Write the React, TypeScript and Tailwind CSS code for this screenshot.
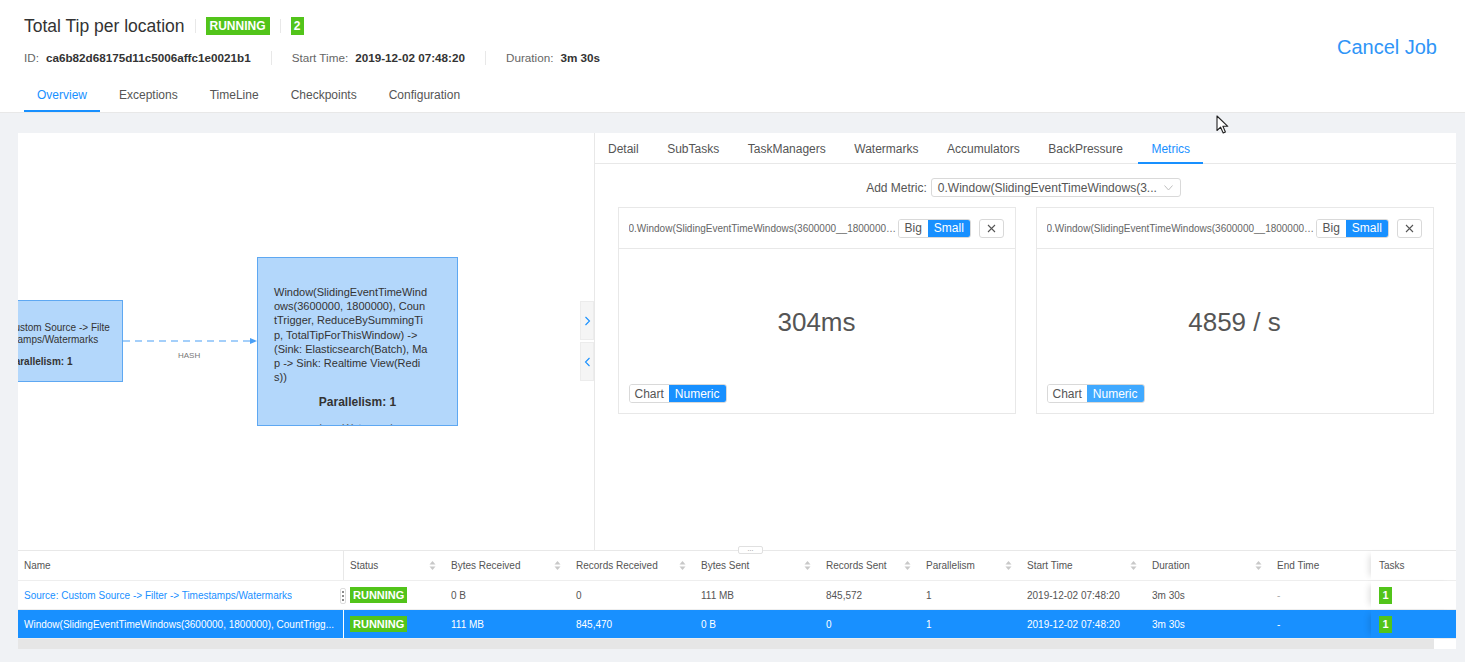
import React from 'react';

const Badge = ({ children, className = '' }: { children: React.ReactNode; className?: string }) => (
  <span className={`inline-flex items-center justify-center bg-[#52c41a] text-white font-bold ${className}`}>{children}</span>
);

const Sep = () => <span className="w-px h-[14px] bg-[#e8e8e8]" />;

const SortIcon = () => (
  <svg width="7" height="11" viewBox="0 0 7 11" className="shrink-0">
    <path d="M3.5 1L6.5 4.5H0.5Z" fill="#c8c8c8" />
    <path d="M3.5 10L0.5 6.5H6.5Z" fill="#c8c8c8" />
  </svg>
);

const Cursor = () => (
  <svg width="13" height="19" viewBox="0 0 13 19" className="absolute left-[1216px] top-[115px]">
    <path d="M1 1V15.5L4.6 12.2L7.2 18L9.4 17L6.9 11.3H11.8Z" fill="white" stroke="#222" strokeWidth="1.1" strokeLinejoin="round" />
  </svg>
);

const cols = [
  { name: 'Name', w: 326, sort: false },
  { name: 'Status', w: 101, sort: true },
  { name: 'Bytes Received', w: 125, sort: true },
  { name: 'Records Received', w: 125, sort: true },
  { name: 'Bytes Sent', w: 125, sort: true },
  { name: 'Records Sent', w: 100, sort: true },
  { name: 'Parallelism', w: 101, sort: true },
  { name: 'Start Time', w: 125, sort: true },
  { name: 'Duration', w: 125, sort: true },
  { name: 'End Time', w: 100, sort: false },
];

const rows = [
  {
    name: 'Source: Custom Source -> Filter -> Timestamps/Watermarks',
    values: ['0 B', '0', '111 MB', '845,572', '1', '2019-12-02 07:48:20', '3m 30s', '-'],
    selected: false,
  },
  {
    name: 'Window(SlidingEventTimeWindows(3600000, 1800000), CountTrigg...',
    values: ['111 MB', '845,470', '0 B', '0', '1', '2019-12-02 07:48:20', '3m 30s', '-'],
    selected: true,
  },
];

const gridCols = 'grid grid-cols-[326px_101px_125px_125px_125px_100px_101px_125px_125px_100px_85px]';

const MetricCard = ({ value, numericHover }: { value: string; numericHover?: boolean }) => (
  <div className="w-[398px] h-[207px] border border-[#e8e8e8] flex flex-col">
    <div className="h-[41px] border-b border-[#e8e8e8] flex items-center pl-[10px] pr-[11px]">
      <span className="w-[270px] truncate text-[10px] text-[#666]">0.Window(SlidingEventTimeWindows(3600000__1800000)__CountTrigger</span>
      <div className="flex h-[19px] text-[12px] rounded-[3px] overflow-hidden border border-[#d9d9d9]">
        <span className="px-[6px] flex items-center text-[#555] bg-white">Big</span>
        <span className="px-[6px] flex items-center text-white bg-[#1890ff]">Small</span>
      </div>
      <span className="ml-[8px] w-[25px] h-[19px] border border-[#d9d9d9] rounded-[3px] flex items-center justify-center">
        <svg width="9" height="9" viewBox="0 0 9 9">
          <path d="M1 1L8 8M8 1L1 8" stroke="#555" strokeWidth="1.1" />
        </svg>
      </span>
    </div>
    <div className="flex-1 flex flex-col px-[10px] pb-[10px]">
      <div className="flex-1 flex items-center justify-center text-[26px] text-[#555] pt-[12px]">{value}</div>
      <div className="flex h-[19px] text-[12px] rounded-[3px] overflow-hidden border border-[#d9d9d9] self-start">
        <span className="px-[5px] flex items-center text-[#555] bg-white">Chart</span>
        <span className={`px-[6px] flex items-center text-white ${numericHover ? 'bg-[#40a9ff]' : 'bg-[#1890ff]'}`}>Numeric</span>
      </div>
    </div>
  </div>
);

export default function App() {
  const topTabs = ['Overview', 'Exceptions', 'TimeLine', 'Checkpoints', 'Configuration'];
  const sideTabs = ['Detail', 'SubTasks', 'TaskManagers', 'Watermarks', 'Accumulators', 'BackPressure', 'Metrics'];

  return (
    <div className="relative w-[1465px] h-[662px] overflow-hidden bg-[#f0f2f5] font-['Liberation_Sans',Arial,sans-serif] text-[#333]">
      {/* header */}
      <header className="h-[113px] bg-white border-b border-[#e8e8e8] pl-6 pr-[28px] flex justify-between">
        <div className="pt-[14px]">
          <div className="flex items-center h-6">
            <h1 className="text-[17.5px] text-[#333] font-normal leading-6">Total Tip per location</h1>
            <span className="mx-[10px] flex"><Sep /></span>
            <Badge className="h-[18px] px-[4px] text-[12px]">RUNNING</Badge>
            <span className="mx-[10px] flex"><Sep /></span>
            <Badge className="h-[18px] w-[13px] text-[12px]">2</Badge>
          </div>
          <div className="mt-[11px] flex items-center h-[18px] text-[11.7px] gap-[20px]">
            <span>
              <span className="text-[#666]">ID:</span>
              <span className="ml-[7px] font-bold">ca6b82d68175d11c5006affc1e0021b1</span>
            </span>
            <Sep />
            <span>
              <span className="text-[#666]">Start Time:</span>
              <span className="ml-[7px] font-bold">2019-12-02 07:48:20</span>
            </span>
            <Sep />
            <span>
              <span className="text-[#666]">Duration:</span>
              <span className="ml-[7px] font-bold">3m 30s</span>
            </span>
          </div>
          <nav className="mt-[5px] flex gap-[6px] text-[12px]">
            {topTabs.map((t, i) => (
              <div key={t} className={`relative h-[40px] px-[13px] flex items-center pt-[6px] ${i === 0 ? 'text-[#1890ff]' : 'text-[#555]'}`}>
                {t}
                {i === 0 && <span className="absolute left-0 right-0 bottom-0 h-[2px] bg-[#1890ff]" />}
              </div>
            ))}
          </nav>
        </div>
        <div className="pt-[35px]">
          <button className="text-[20px] text-[#2f95f7] leading-6">Cancel Job</button>
        </div>
      </header>

      <main className="pt-[20px] pl-[18px]">
        <div className="w-[1438px] bg-white flex flex-col relative">
          <div className="flex h-[417px]">
            {/* graph canvas */}
            <div className="relative w-[576px] overflow-hidden">
              <div className="absolute left-[-77px] top-[167px] w-[182px] h-[82px] bg-[#b3d7fb] border border-[#5ea8f2] pl-[28px] pt-[21px] text-[10px] leading-[12px] text-[#333]">
                <div className="whitespace-nowrap">Source: Custom Source -&gt; Filte</div>
                <div className="whitespace-nowrap">r -&gt; Timestamps/Watermarks</div>
                <div className="mt-[10px] pl-[38px] whitespace-nowrap font-bold">Parallelism: 1</div>
              </div>
              <svg className="absolute left-[105px] top-[203px]" width="134" height="10" viewBox="0 0 134 10">
                <path d="M0 5H127" stroke="#4a9ff5" strokeWidth="1.2" strokeDasharray="7 5" />
                <path d="M127 2L134 5L127 8Z" fill="#4a9ff5" />
              </svg>
              <span className="absolute left-[160px] top-[217px] text-[8px] text-[#777]">HASH</span>
              <div className="absolute left-[239px] top-[124px] w-[201px] h-[169px] bg-[#b3d7fb] border border-[#5ea8f2] overflow-hidden px-4 pt-[27px] text-[11px] leading-[14.2px] text-[#333]">
                <div className="whitespace-nowrap">
                  <div>Window(SlidingEventTimeWind</div>
                  <div>ows(3600000, 1800000), Coun</div>
                  <div>tTrigger, ReduceBySummingTi</div>
                  <div>p, TotalTipForThisWindow) -&gt;</div>
                  <div>(Sink: Elasticsearch(Batch), Ma</div>
                  <div>p -&gt; Sink: Realtime View(Redi</div>
                  <div>s))</div>
                </div>
                <div className="mt-[11px] text-center font-bold text-[12px] leading-[14px]">Parallelism: 1</div>
                <div className="mt-[12px] text-center text-[11px] text-[#666]">Low Watermark</div>
              </div>
              <div className="absolute right-0 top-[168px] flex flex-col gap-[2px]">
                <span className="w-[14px] h-[39px] bg-[#f5f5f5] border border-[#ececec] flex items-center justify-center">
                  <svg width="7" height="10" viewBox="0 0 7 10"><path d="M1.5 1L5.5 5L1.5 9" fill="none" stroke="#1890ff" strokeWidth="1.1" /></svg>
                </span>
                <span className="w-[14px] h-[39px] bg-[#f5f5f5] border border-[#ececec] flex items-center justify-center">
                  <svg width="7" height="10" viewBox="0 0 7 10"><path d="M5.5 1L1.5 5L5.5 9" fill="none" stroke="#1890ff" strokeWidth="1.1" /></svg>
                </span>
              </div>
            </div>

            {/* side panel */}
            <div className="flex-1 border-l border-[#e8e8e8] flex flex-col">
              <div className="h-[31px] border-b border-[#e8e8e8] flex gap-[2.5px] text-[12px]">
                {sideTabs.map((t) => (
                  <div key={t} className={`relative px-[13px] pt-[2px] flex items-center ${t === 'Metrics' ? 'text-[#1890ff]' : 'text-[#555]'}`}>
                    {t}
                    {t === 'Metrics' && <span className="absolute left-0 right-0 bottom-[-1px] h-[2px] bg-[#1890ff]" />}
                  </div>
                ))}
              </div>
              <div className="mt-[14px] flex items-center justify-center gap-[4px] text-[12px] text-[#555] pr-[4px]">
                <span>Add Metric:</span>
                <div className="w-[250px] h-[19px] border border-[#d9d9d9] rounded-[3px] flex items-center justify-between pl-[6px] pr-[7px]">
                  <span>0.Window(SlidingEventTimeWindows(3...</span>
                  <svg width="9" height="6" viewBox="0 0 9 6"><path d="M0.5 0.5L4.5 5L8.5 0.5" fill="none" stroke="#bfbfbf" strokeWidth="1" /></svg>
                </div>
              </div>
              <div className="mt-[10px] flex justify-center gap-[20px]">
                <MetricCard value="304ms" />
                <MetricCard value="4859 / s" numericHover />
              </div>
            </div>
          </div>

          {/* resize handle */}
          <span className="absolute left-[720px] top-[413px] w-[25px] h-[8px] bg-white border border-[#e0e0e0] rounded-[2px] text-[7px] leading-[4px] text-[#888] text-center">...</span>

          {/* table */}
          <div className="border-t border-[#e8e8e8] text-[10px]">
            <div className={`${gridCols} h-[30px] border-b border-[#eee] text-[#555]`}>
              {cols.map((c, i) => (
                <div key={c.name} className={`flex items-center justify-between pl-[6px] pr-[9px] ${i === 0 ? 'border-r border-[#e8e8e8]' : ''}`}>
                  <span>{c.name}</span>
                  {c.sort && <SortIcon />}
                </div>
              ))}
              <div className="flex items-center pl-[8px] shadow-[-6px_0_6px_-4px_rgba(0,0,0,0.12)]">Tasks</div>
            </div>
            {rows.map((r) => (
              <div key={r.name} className={`${gridCols} h-[29px] border-b border-[#eee] ${r.selected ? 'bg-[#1890ff] text-white' : 'bg-white text-[#555]'}`}>
                <div className={`relative flex items-center pl-[6px] pr-[4px] ${r.selected ? 'border-r border-white' : 'text-[#1890ff]'}`}>
                  <span className="truncate">{r.name}</span>
                </div>
                <div className="flex items-center pl-[6px]">
                  <Badge className="h-[16px] px-[3px] text-[11px]">RUNNING</Badge>
                </div>
                {r.values.map((v, j) => (
                  <div key={j} className={`flex items-center pl-[6px] ${r.selected ? '' : v === '-' ? 'text-[#aaa]' : ''}`}>{v}</div>
                ))}
                <div className={`flex items-center pl-[8px] shadow-[-6px_0_6px_-4px_rgba(0,0,0,0.12)] ${r.selected ? 'bg-[#1890ff]' : 'bg-white'}`}>
                  <Badge className="h-[17px] w-[13px] text-[11px]">1</Badge>
                </div>
              </div>
            ))}
            <div className="flex h-[10px]">
              <div className="w-[1416px] bg-[#e6e6e6]" />
              <div className="flex-1 bg-white" />
            </div>
          </div>
          <span className="absolute left-[322px] top-[455px] w-[6px] h-[16px] bg-white border border-[#ddd] rounded-[2px] flex flex-col items-center justify-center gap-[2px]">
            <i className="w-[2px] h-[2px] bg-[#666] rounded-full" />
            <i className="w-[2px] h-[2px] bg-[#666] rounded-full" />
            <i className="w-[2px] h-[2px] bg-[#666] rounded-full" />
          </span>
        </div>
      </main>
      <Cursor />
    </div>
  );
}
